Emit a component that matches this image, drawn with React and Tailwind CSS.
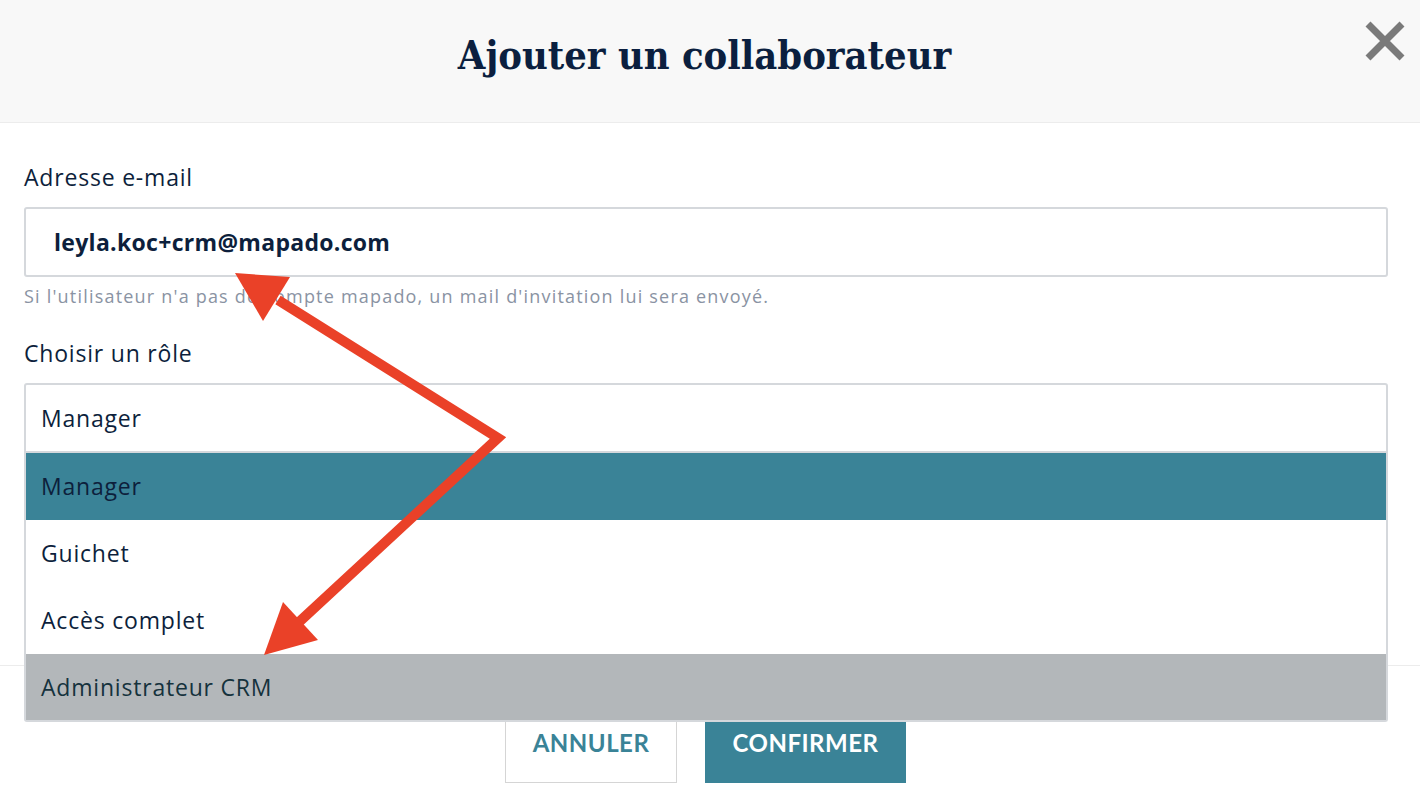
import React from 'react';

const roles = [
  { label: 'Manager', style: 'bg-[#3a8397] text-[#0d1f3c]' },
  { label: 'Guichet', style: 'bg-white text-[#0d1f3c]' },
  { label: 'Accès complet', style: 'bg-white text-[#0d1f3c]' },
  { label: 'Administrateur CRM', style: 'bg-[#b3b7ba] text-[#15323d]' },
];

const CloseIcon = () => (
  <svg width="42" height="42" viewBox="0 0 42 42">
    <path d="M4 4 L38 38 M38 4 L4 38" stroke="#7a7a7a" strokeWidth="7" />
  </svg>
);

// red annotation arrows drawn over the page
const Arrows = () => (
  <svg className="absolute inset-0 z-20 pointer-events-none" width="1420" height="802" viewBox="0 0 1420 802">
    <polyline points="278,300 498,438 298,623" fill="none" stroke="#ea4128" strokeWidth="10" strokeLinejoin="miter" />
    <polygon points="235,273 290,277 263,321" fill="#ea4128" />
    <polygon points="264,655 283,602 318,640" fill="#ea4128" />
  </svg>
);

export default function App() {
  return (
    <div className="relative w-[1420px] h-[802px] overflow-hidden bg-white font-['Open_Sans',sans-serif] text-[#0d1f3c]">
      {/* Header */}
      <div className="relative h-[123px] bg-[#f8f8f8] border-b border-[#ececec] flex items-center justify-center">
        <h1 className="font-['DejaVu_Serif_Condensed','DejaVu_Serif',serif] font-bold text-[39.5px] leading-none text-[#0b1f3f] -mt-[11px] -ml-[11px]">
          Ajouter un collaborateur
        </h1>
        <button className="absolute right-[14px] top-[20px]">
          <CloseIcon />
        </button>
      </div>

      {/* Body */}
      <div className="pl-[24px] pr-[32px] pt-[39px] h-[542px]">
        <label className="block text-[23px] leading-[30px] tracking-[0.8px]">Adresse e-mail</label>
        <div className="mt-[15px] h-[70px] border-2 border-[#d5d8dc] rounded-[3px] flex items-center px-[28px]">
          <span className="font-bold text-[23px] tracking-[0.3px]">leyla.koc+crm@mapado.com</span>
        </div>
        <p className="mt-[7px] text-[18px] leading-[24px] tracking-[1.2px] text-[#8a93a3]">
          Si l'utilisateur n'a pas de compte mapado, un mail d'invitation lui sera envoyé.
        </p>
        <label className="block mt-[30px] text-[23px] leading-[30px] tracking-[0.8px]">Choisir un rôle</label>

        {/* Select with open list */}
        <div className="relative mt-[15px] z-10">
          <div className="h-[70px] border-2 border-[#d5d8dc] rounded-t-[3px] flex items-center px-[15px] text-[23px] tracking-[0.8px] bg-white">
            Manager
          </div>
          <div className="absolute left-0 right-0 top-full border-2 border-t-0 border-[#d5d8dc] rounded-b-[3px] bg-white">
            {roles.map((r, i) => (
              <div
                key={r.label}
                className={`flex items-center px-[15px] text-[23px] tracking-[0.8px] ${r.style} ${i === 3 ? 'h-[66px]' : 'h-[67px]'}`}
              >
                {r.label}
              </div>
            ))}
          </div>
        </div>
      </div>

      {/* Footer */}
      <div className="border-t border-[#ececec] flex justify-center gap-[28px] pt-[37px] pr-[9px] font-['Lato',sans-serif]">
        <button className="w-[172px] h-[80px] border border-[#d5d5d5] bg-white text-[#3a8397] font-bold text-[24px] tracking-[0.5px]">
          ANNULER
        </button>
        <button className="w-[201px] h-[80px] bg-[#3a8397] text-white font-bold text-[24px] tracking-[0.5px]">
          CONFIRMER
        </button>
      </div>

      <Arrows />
    </div>
  );
}
